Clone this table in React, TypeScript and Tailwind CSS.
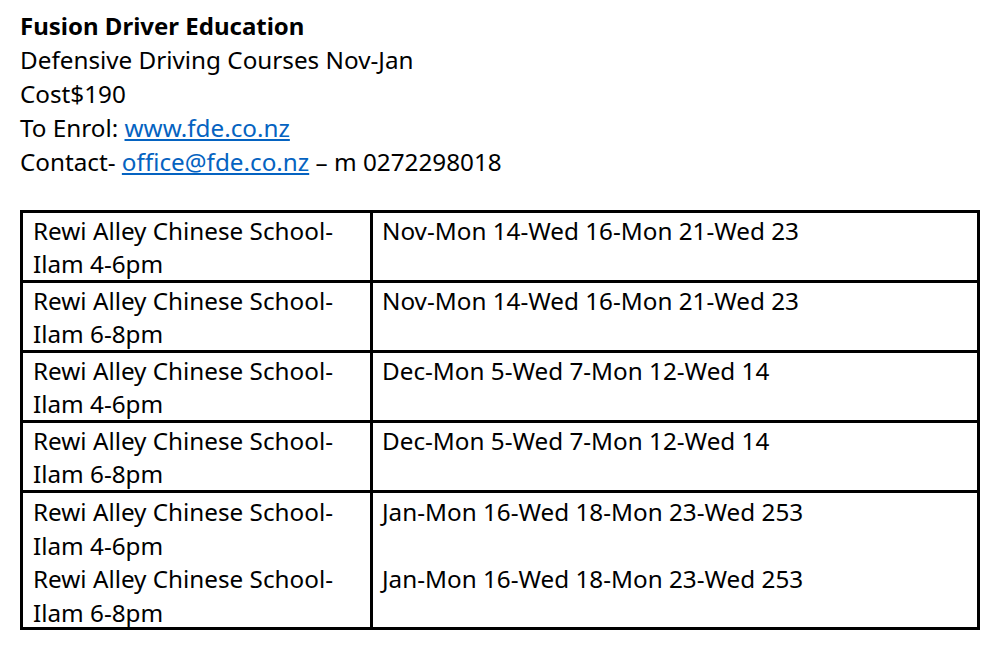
const rows = [
  { place: ["Rewi Alley Chinese School-", "Ilam 4-6pm"], dates: "Nov-Mon 14-Wed 16-Mon 21-Wed 23" },
  { place: ["Rewi Alley Chinese School-", "Ilam 6-8pm"], dates: "Nov-Mon 14-Wed 16-Mon 21-Wed 23" },
  { place: ["Rewi Alley Chinese School-", "Ilam 4-6pm"], dates: "Dec-Mon 5-Wed 7-Mon 12-Wed 14" },
  { place: ["Rewi Alley Chinese School-", "Ilam 6-8pm"], dates: "Dec-Mon 5-Wed 7-Mon 12-Wed 14" },
];

const lastRow = [
  { place: ["Rewi Alley Chinese School-", "Ilam 4-6pm"], dates: "Jan-Mon 16-Wed 18-Mon 23-Wed 253" },
  { place: ["Rewi Alley Chinese School-", "Ilam 6-8pm"], dates: "Jan-Mon 16-Wed 18-Mon 23-Wed 253" },
];

const Cell = ({ place, dates }: { place: string[]; dates: string }) => (
  <>
    <div className="border-r-[3px] border-black pl-[10px] pt-[2px]">
      {place.map((line, i) => (
        <div key={i}>{line}</div>
      ))}
    </div>
    <div className="pl-[9px] pt-[2px]">
      <div>{dates}</div>
    </div>
  </>
);

export default function App() {
  return (
    <div
      className="min-h-[657px] w-[1000px] bg-white pl-[20px] pt-[9px] text-[24.25px] leading-[34px] text-black"
      style={{ fontFamily: '"Noto Sans", "Open Sans", sans-serif' }}
    >
      <div className="text-[24px] font-bold">Fusion Driver Education</div>
      <div>Defensive Driving Courses Nov-Jan</div>
      <div>Cost$190</div>
      <div>
        To Enrol:{" "}
        <a href="#" className="text-[#0563c1] underline">
          www.fde.co.nz
        </a>
      </div>
      <div>
        Contact-{" "}
        <a href="#" className="text-[#0563c1] underline">
          office@fde.co.nz
        </a>{" "}
        – m 0272298018
      </div>

      <div className="mt-[31px] w-[960px] border-[3px] border-black leading-[32.5px]">
        {rows.map((r, i) => (
          <div
            key={i}
            className={`grid grid-cols-[350px_1fr] ${i > 0 ? "h-[70px] border-t-[3px] border-black" : "h-[67px]"}`}
          >
            <Cell place={r.place} dates={r.dates} />
          </div>
        ))}
        <div className="grid h-[137px] grid-cols-[350px_1fr] border-t-[3px] border-black">
          <div className="border-r-[3px] border-black pl-[10px] pt-[2px] leading-[33.5px]">
            {lastRow.map((r, i) => (
              <div key={i}>
                <div>{r.place[0]}</div>
                <div>{r.place[1]}</div>
              </div>
            ))}
          </div>
          <div className="pl-[9px] pt-[2px] leading-[33.5px]">
            {lastRow.map((r, i) => (
              <div key={i}>
                <div>{r.dates}</div>
                <div>&nbsp;</div>
              </div>
            ))}
          </div>
        </div>
      </div>
    </div>
  );
}
